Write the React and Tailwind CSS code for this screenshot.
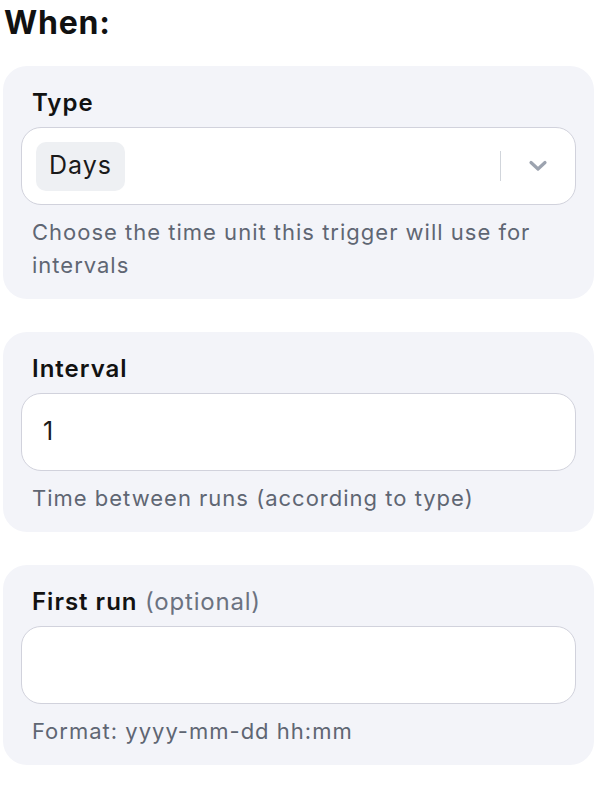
import React from "react"

function Field({ label, optional, hint, children }) {
    return (
        <div className="mx-[3px] w-[591px] rounded-3xl bg-[#f3f4f9] px-[18px] pt-[21px] pb-[17px]">
            <div className="pl-[11px] text-[24px] font-semibold leading-[31px] tracking-[1px] text-[#121212]">
                {label}
                {optional && <span className="font-normal tracking-[0.8px] text-[#6b7280]"> (optional)</span>}
            </div>
            <div className="mt-[9px] flex h-[78px] items-center rounded-[20px] border border-[#d1d2dc] bg-white">
                {children}
            </div>
            <p className="mt-[11px] pl-[11px] text-[22px] leading-[33px] tracking-[1px] text-[#5f6673]">{hint}</p>
        </div>
    )
}

export default function App() {
    return (
        <div className="bg-white pb-6" style={{ fontFamily: "Inter, 'Noto Sans', sans-serif" }}>
            <h2 className="pl-[4px] pt-[2px] text-[32px] font-bold leading-[42px] tracking-[0.8px] text-[#111]">When:</h2>
            <div className="mt-[22px] flex flex-col gap-[33px]">
                <Field label="Type" hint="Choose the time unit this trigger will use for intervals">
                    <div className="flex flex-1 items-center pl-[14px]">
                        <span className="flex h-[49px] w-[89px] items-center justify-center rounded-[10px] bg-[#eef0f3] text-[25px] tracking-[1px] text-[#1a1a1a]">
                            Days
                        </span>
                    </div>
                    <div className="h-[30px] w-px bg-[#d1d5db]" />
                    <div className="flex w-[74px] items-center justify-center">
                        <svg width="20" height="12" viewBox="0 0 20 12" fill="none">
                            <path d="M3 2.5 L10 9 L17 2.5" stroke="#9ca3af" strokeWidth="3.2" strokeLinecap="round" strokeLinejoin="round" />
                        </svg>
                    </div>
                </Field>
                <Field label="Interval" hint="Time between runs (according to type)">
                    <span className="pl-[21px] text-[25px] text-[#1a1a1a]">1</span>
                </Field>
                <Field label="First run" optional hint="Format: yyyy-mm-dd hh:mm">
                    <span />
                </Field>
            </div>
        </div>
    )
}
